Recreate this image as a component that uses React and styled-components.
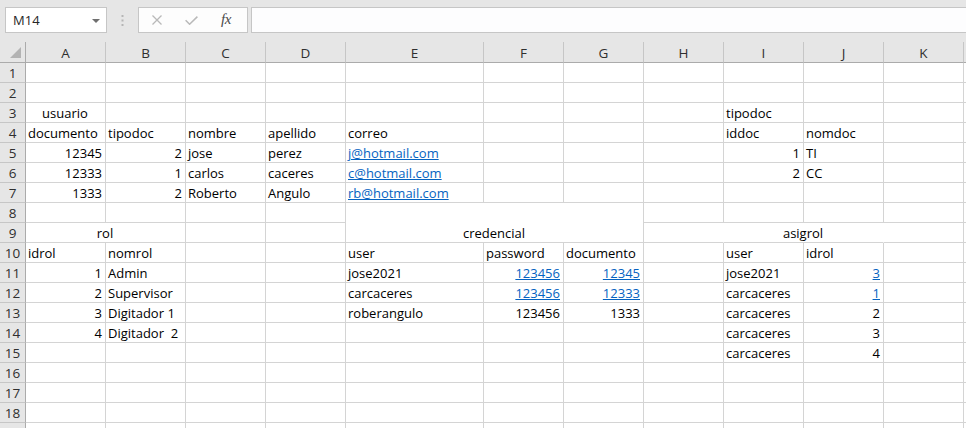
import React from "react";
import styled, { createGlobalStyle } from "styled-components";

const GlobalStyle = createGlobalStyle`
  html, body {
    margin: 0;
    padding: 0;
    height: 100%;
    overflow: hidden;
    background: #fff;
  }
  body {
    font-family: "Open Sans", "Liberation Sans", sans-serif;
  }
`;

const LETTERS = ["A", "B", "C", "D", "E", "F", "G", "H", "I", "J", "K", "L"];

// sheet content by row / column
const DATA = {
  3: { A: { v: "usuario", align: "center" }, I: { v: "tipodoc" } },
  4: {
    A: { v: "documento" }, B: { v: "tipodoc" }, C: { v: "nombre" }, D: { v: "apellido" },
    E: { v: "correo" }, I: { v: "iddoc" }, J: { v: "nomdoc" },
  },
  5: {
    A: { v: "12345", align: "right" }, B: { v: "2", align: "right" }, C: { v: "jose" }, D: { v: "perez" },
    E: { v: "j@hotmail.com", link: true }, I: { v: "1", align: "right" }, J: { v: "TI" },
  },
  6: {
    A: { v: "12333", align: "right" }, B: { v: "1", align: "right" }, C: { v: "carlos" }, D: { v: "caceres" },
    E: { v: "c@hotmail.com", link: true }, I: { v: "2", align: "right" }, J: { v: "CC" },
  },
  7: {
    A: { v: "1333", align: "right" }, B: { v: "2", align: "right" }, C: { v: "Roberto" }, D: { v: "Angulo" },
    E: { v: "rb@hotmail.com", link: true },
  },
  8: { E: { v: "credencial", align: "center", span: 3, rows: 2 } },
  9: {
    A: { v: "rol", align: "center", span: 2 },
    H: { noRight: true },
    I: { v: "asigrol", align: "center", span: 2, noRight: true },
  },
  10: {
    A: { v: "idrol" }, B: { v: "nomrol" }, E: { v: "user" }, F: { v: "password" }, G: { v: "documento" },
    I: { v: "user" }, J: { v: "idrol" },
  },
  11: {
    A: { v: "1", align: "right" }, B: { v: "Admin" }, E: { v: "jose2021" },
    F: { v: "123456", align: "right", link: true }, G: { v: "12345", align: "right", link: true },
    I: { v: "jose2021" }, J: { v: "3", align: "right", link: true },
  },
  12: {
    A: { v: "2", align: "right" }, B: { v: "Supervisor" }, E: { v: "carcaceres" },
    F: { v: "123456", align: "right", link: true }, G: { v: "12333", align: "right", link: true },
    I: { v: "carcaceres" }, J: { v: "1", align: "right", link: true },
  },
  13: {
    A: { v: "3", align: "right" }, B: { v: "Digitador 1" }, E: { v: "roberangulo" },
    F: { v: "123456", align: "right" }, G: { v: "1333", align: "right" },
    I: { v: "carcaceres" }, J: { v: "2", align: "right" },
  },
  14: {
    A: { v: "4", align: "right" }, B: { v: "Digitador  2" },
    I: { v: "carcaceres" }, J: { v: "3", align: "right" },
  },
  15: { I: { v: "carcaceres" }, J: { v: "4", align: "right" } },
};

const LAST_ROW = 19;

function buildCells() {
  const covered = new Set();
  const out = [];
  for (let r = 1; r <= LAST_ROW; r++) {
    // last row only peeks in under the window edge, its number is not visible
    out.push(<RowHead key={`h${r}`}>{r < LAST_ROW ? r : ""}</RowHead>);
    const row = DATA[r] || {};
    LETTERS.forEach((col, ci) => {
      if (covered.has(`${col}${r}`)) return;
      const cell = row[col] || {};
      const span = cell.span || 1;
      const rows = cell.rows || 1;
      for (let dr = 0; dr < rows; dr++) {
        for (let dc = 0; dc < span; dc++) {
          if (dr || dc) covered.add(`${LETTERS[ci + dc]}${r + dr}`);
        }
      }
      out.push(
        <Cell
          key={`${col}${r}`}
          $span={span}
          $rows={rows}
          $align={cell.align}
          $noRight={cell.noRight}
        >
          {cell.link ? <Link>{cell.v}</Link> : cell.v}
        </Cell>
      );
    });
  }
  return out;
}

export default function App() {
  return (
    <>
      <GlobalStyle />
      <Window>
        <FormulaBar>
          <NameBox>
            <span>M14</span>
            <Caret />
          </NameBox>
          <Grip>
            <svg width="3" height="11" viewBox="0 0 3 11">
              <rect x="0.5" y="0" width="2" height="2" fill="#b5b5b5" />
              <rect x="0.5" y="4.5" width="2" height="2" fill="#b5b5b5" />
              <rect x="0.5" y="9" width="2" height="2" fill="#b5b5b5" />
            </svg>
          </Grip>
          <FxBox>
            <svg width="10" height="10" viewBox="0 0 10 10">
              <path d="M0.5 0.5 L9.5 9.5 M9.5 0.5 L0.5 9.5" stroke="#b9b9b9" strokeWidth="1.3" fill="none" />
            </svg>
            <svg width="13" height="9" viewBox="0 0 13 9">
              <path d="M0.6 4.2 L4.6 8.2 L12.4 0.6" stroke="#b9b9b9" strokeWidth="1.5" fill="none" />
            </svg>
            <FxLabel>fx</FxLabel>
          </FxBox>
          <FormulaInput />
        </FormulaBar>
        <Sheet>
          <Corner>
            <svg width="12" height="12" viewBox="0 0 12 12">
              <polygon points="11,0 11,11 0,11" fill="#b3b3b3" />
            </svg>
          </Corner>
          {LETTERS.map((l) => (
            <ColHead key={l}>{l === "L" ? "" : l}</ColHead>
          ))}
          {buildCells()}
        </Sheet>
      </Window>
    </>
  );
}

const Window = styled.div`
  width: 966px;
  height: 428px;
  overflow: hidden;
  background: #fff;
`;

const FormulaBar = styled.div`
  height: 42px;
  box-sizing: border-box;
  background: #e6e6e6;
  display: flex;
  align-items: flex-start;
  padding: 7px 0 0 5px;
`;

const NameBox = styled.div`
  width: 102px;
  height: 26px;
  box-sizing: border-box;
  border: 1px solid #c6c6c6;
  background: #fff;
  display: flex;
  align-items: center;
  justify-content: space-between;
  padding: 0 6px 0 7px;
  font: 13px "Open Sans", "Liberation Sans", sans-serif;
  color: #262626;
`;

const Caret = styled.span`
  width: 0;
  height: 0;
  border-left: 4px solid transparent;
  border-right: 4px solid transparent;
  border-top: 4px solid #6f6f6f;
  margin-top: 1px;
`;

const Grip = styled.div`
  width: 31px;
  height: 26px;
  display: flex;
  align-items: center;
  justify-content: center;
`;

const FxBox = styled.div`
  width: 110px;
  height: 26px;
  box-sizing: border-box;
  border: 1px solid #c6c6c6;
  background: #fdfdfd;
  display: flex;
  align-items: center;
  padding-left: 13px;
  gap: 23px;
`;

const FxLabel = styled.span`
  font: italic 15px "Liberation Serif", "DejaVu Serif", serif;
  color: #4a4a4a;
  letter-spacing: -0.5px;
  margin-top: -2px;
`;

const FormulaInput = styled.div`
  flex: 1;
  height: 26px;
  box-sizing: border-box;
  margin-left: 3px;
  margin-right: -2px;
  border: 1px solid #c6c6c6;
  background: #fdfdfe;
`;

const Sheet = styled.div`
  display: grid;
  grid-template-columns: 26px 80px 80px 80px 80px 138px 80px 80px 80px 80px 80px 80px 1fr;
  grid-template-rows: 21px;
  grid-auto-rows: 20px;
`;

const Corner = styled.div`
  box-sizing: border-box;
  background: #e6e6e6;
  border-right: 1px solid #ababab;
  border-bottom: 1px solid #ababab;
  display: flex;
  align-items: flex-end;
  justify-content: flex-end;
  padding: 0 3px 3px 0;
`;

const ColHead = styled.div`
  box-sizing: border-box;
  background: #e6e6e6;
  border-right: 1px solid #c6c6c6;
  border-bottom: 1px solid #ababab;
  display: flex;
  align-items: center;
  justify-content: center;
  font: 13.5px "Open Sans", "Liberation Sans", sans-serif;
  color: #2f2f2f;
  padding-top: 1px;
`;

const RowHead = styled.div`
  box-sizing: border-box;
  background: #e6e6e6;
  border-right: 1px solid #ababab;
  border-bottom: 1px solid #c6c6c6;
  display: flex;
  align-items: center;
  justify-content: center;
  font: 13.5px "Open Sans", "Liberation Sans", sans-serif;
  color: #2f2f2f;
  padding-top: 1px;
`;

const Cell = styled.div`
  box-sizing: border-box;
  grid-column: span ${(p) => p.$span};
  grid-row: span ${(p) => p.$rows};
  border-right: 1px solid ${(p) => (p.$noRight ? "#fff" : "#d4d4d4")};
  border-bottom: 1px solid #d4d4d4;
  background: #fff;
  display: flex;
  align-items: flex-end;
  justify-content: ${(p) =>
    p.$align === "right" ? "flex-end" : p.$align === "center" ? "center" : "flex-start"};
  padding: 0 3px 0 2px;
  font: 13px/17px "Open Sans", "Liberation Sans", sans-serif;
  color: #000;
  white-space: pre;
`;

const Link = styled.span`
  color: #0563c1;
  text-decoration: underline;
  text-underline-offset: 1px;
`;
